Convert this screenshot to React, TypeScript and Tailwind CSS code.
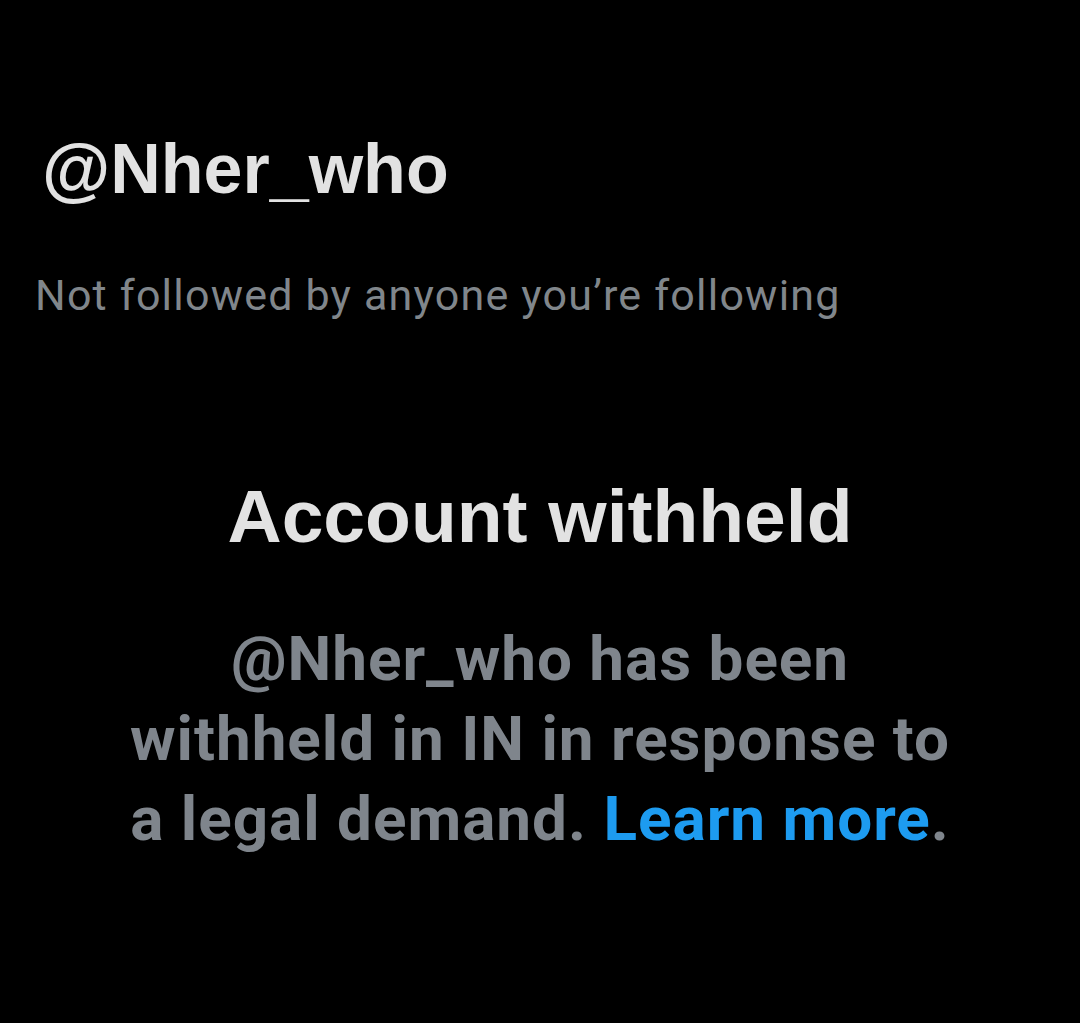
export default function App() {
  return (
    <div className="min-h-[1023px] w-[1080px] bg-black pt-[134px]">
      <div className="pl-[42px] font-['Liberation_Sans',Arial,sans-serif] text-[70px] leading-[70px] font-bold text-[#e2e2e2]">
        @Nher_who
      </div>
      <div className="mt-[70px] pl-[35px] font-['Roboto','Noto_Sans',sans-serif] text-[43px] leading-[43px] tracking-[1.2px] text-[#80868b]">
        Not followed by anyone you’re following
      </div>
      <div className="mt-[162px] text-center font-['Liberation_Sans',Arial,sans-serif] text-[75px] leading-[75px] font-bold text-[#e2e2e2]">
        Account withheld
      </div>
      <p className="mt-[65px] text-center font-['Roboto','Noto_Sans',sans-serif] text-[62px] leading-[80px] tracking-[1px] font-bold text-[#7f858c]">
        @Nher_who has been
        <br />
        withheld in IN in response to
        <br />
        a legal demand. <span className="text-[#1d9bf0]">Learn more</span>.
      </p>
    </div>
  );
}
